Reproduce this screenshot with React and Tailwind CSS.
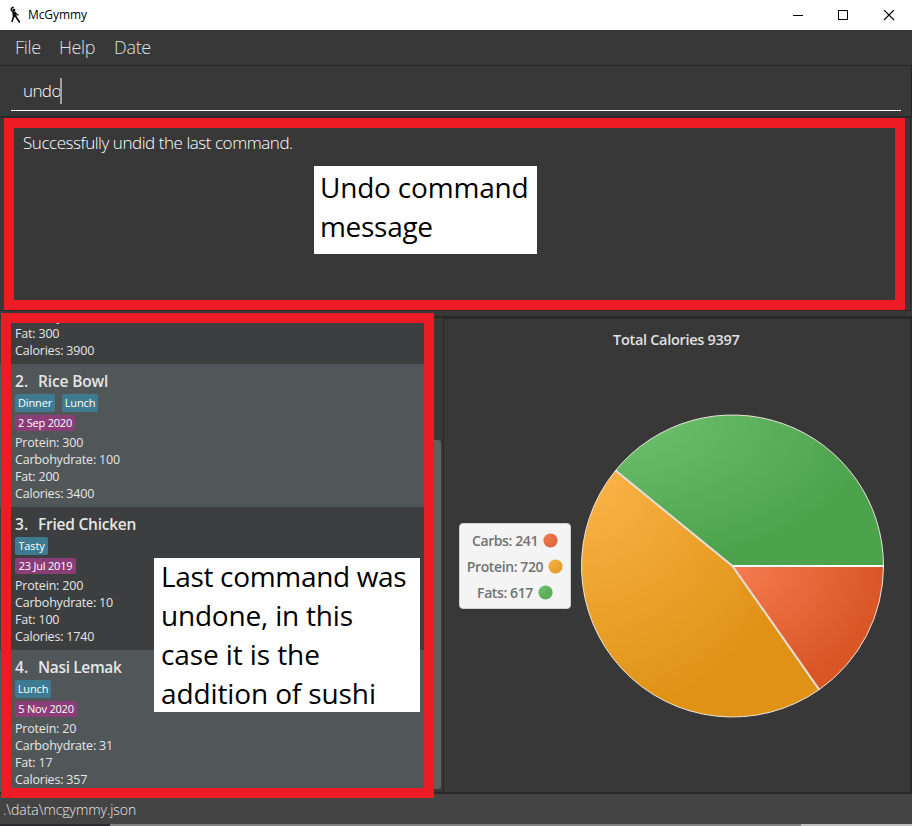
import React from "react";

const meals = [
  {
    n: 2, name: "Rice Bowl", row: "bg-[#515658]", nameCls: "tracking-[-0.15px]",
    tags: [{ t: "Dinner", w: "w-[40px]" }, { t: "Lunch", w: "w-[36px]" }],
    date: "2 Sep 2020", dateW: "w-[60px]",
    facts: ["Protein: 300", "Carbohydrate: 100", "Fat: 200", "Calories: 3400"],
  },
  {
    n: 3, name: "Fried Chicken", row: "bg-[#3c3e3f]", nameCls: "tracking-[-0.24px]",
    tags: [{ t: "Tasty", w: "w-[33px]" }],
    date: "23 Jul 2019", dateW: "w-[61px]",
    facts: ["Protein: 200", "Carbohydrate: 10", "Fat: 100", "Calories: 1740"],
  },
  {
    n: 4, name: "Nasi Lemak", row: "bg-[#515658]", nameCls: "tracking-[-0.35px]",
    tags: [{ t: "Lunch", w: "w-[36px]" }],
    date: "5 Nov 2020", dateW: "w-[62px]",
    facts: ["Protein: 20", "Carbohydrate: 31", "Fat: 17", "Calories: 357"],
  },
];

const CX = 151.5;
const CY = 152;
const R = 151;

const slices = [
  { id: "carbs", label: "Carbs: 241", value: 241, from: "#f67c52", to: "#da5625", dot: "#e0683f" },
  { id: "protein", label: "Protein: 720", value: 720, from: "#fbb549", to: "#e09216", dot: "#e6a030" },
  { id: "fats", label: "Fats: 617", value: 617, from: "#6fc26f", to: "#4da24c", dot: "#5bad5b" },
];

function slicePaths() {
  const total = slices.reduce((sum, s) => sum + s.value, 0);
  let angle = 0;
  return slices.map((s) => {
    const start = angle;
    angle += (s.value / total) * Math.PI * 2;
    const point = (a) => `${CX + R * Math.cos(a)} ${CY + R * Math.sin(a)}`;
    const large = angle - start > Math.PI ? 1 : 0;
    return {
      ...s,
      d: `M${CX} ${CY}L${point(start)}A${R} ${R} 0 ${large} 1 ${point(angle)}Z`,
      edge: `M${CX} ${CY}L${point(start)}`,
    };
  });
}

function TitleBar() {
  return (
    <header className="flex h-[30px] shrink-0 items-center bg-white text-black">
      <svg className="ml-[9px] h-[18px] w-[12px]" viewBox="0 0 12 18" fill="none" stroke="#111" strokeLinecap="round" strokeLinejoin="round">
        <circle cx="4.9" cy="3.9" r="1.5" fill="#111" stroke="none" />
        <path d="M4.3 1.2L2.3 2.4V4.3L4.4 6.2" strokeWidth="1.4" />
        <path d="M4.2 6.4L6 6.6L6.8 9.8L4.6 10.2Z" fill="#111" strokeWidth="1.8" />
        <path d="M6.3 6.4L7.8 8.2L9.4 9" strokeWidth="1.1" />
        <path d="M4.8 10.4L4 12.4L3.2 15.4" strokeWidth="1.7" />
        <path d="M6.6 10.2L8.2 12.8L10.4 16" strokeWidth="1.7" />
      </svg>
      <span className="ml-[7px] text-[12px] tracking-[-0.1px]">McGymmy</span>
      <svg className="ml-auto mr-[17px] h-[11px] w-[102px]" viewBox="0 0 102 11" fill="none" stroke="#000" shapeRendering="crispEdges">
        <path d="M0 5.5H10M45.5 .5H54.5V9.5H45.5Z" />
        <path d="M91 0L101 10M101 0L91 10" shapeRendering="auto" strokeWidth="1.1" />
      </svg>
    </header>
  );
}

function Facts({ items }) {
  return items.map((f) => (
    <div key={f} className="h-[17px] whitespace-nowrap text-[12.5px] leading-[17px] tracking-[-0.19px]">{f}</div>
  ));
}

function Meal({ meal }) {
  return (
    <li className={`flex h-[143px] shrink-0 flex-col pl-[15px] pt-[5px] text-[#e6e6e6] ${meal.row}`}>
      <h2 className="flex h-[25px] text-[15.5px] font-semibold leading-[25px]">
        <span className="w-[23px]">{meal.n}.</span>
        <span className={`whitespace-nowrap ${meal.nameCls}`}>{meal.name}</span>
      </h2>
      <div className="flex h-[18px] gap-[7px]">
        {meal.tags.map((tag) => (
          <span key={tag.t} className={`rounded-[2px] bg-[#3e7b91] text-center text-[11px] leading-[18px] tracking-[-0.15px] text-white ${tag.w}`}>{tag.t}</span>
        ))}
      </div>
      <span className={`my-[3px] h-[16px] whitespace-nowrap rounded-[2px] bg-[#8b3d78] text-center text-[11px] leading-[16px] tracking-[-0.2px] text-white ${meal.dateW}`}>{meal.date}</span>
      <Facts items={meal.facts} />
    </li>
  );
}

function Legend() {
  return (
    <div className="flex h-[86px] w-[112px] shrink-0 flex-col justify-center rounded-[4px] border border-[#d0d0d0] bg-[#f4f4f4] pt-px text-[14px] font-semibold text-[#727272]">
      {slices.map((s) => (
        <div key={s.id} className="flex h-[26px] items-center justify-center gap-[5px] leading-[26px]">
          <span className="whitespace-nowrap tracking-[-0.4px]">{s.label}</span>
          <svg className="h-[15px] w-[15px]" viewBox="0 0 15 15">
            <defs>
              <radialGradient id={`${s.id}-dot`} cx="0" cy="0" r="1">
                <stop offset="0" stopColor={s.from} />
                <stop offset="1" stopColor={s.dot} />
              </radialGradient>
            </defs>
            <circle cx="7.5" cy="7.5" r="7.1" fill={`url(#${s.id}-dot)`} />
          </svg>
        </div>
      ))}
    </div>
  );
}

function Pie() {
  const paths = slicePaths();
  return (
    <svg className="ml-[10px] h-[304px] w-[303px] shrink-0" viewBox="0 0 303 304">
      <defs>
        {slices.map((s) => (
          <radialGradient key={s.id} id={s.id} cx="0" cy="0" r="1">
            <stop offset="0" stopColor={s.from} />
            <stop offset="1" stopColor={s.to} />
          </radialGradient>
        ))}
      </defs>
      {paths.map((s) => (
        <path key={s.id} d={s.d} fill={`url(#${s.id})`} stroke="#e9e4dc" strokeWidth="1" strokeLinejoin="round" />
      ))}
      {paths.slice(1).map((s) => (
        <path key={s.id} d={s.edge} stroke="#e6dfd8" strokeWidth="2" />
      ))}
      <path d={paths[0].edge} stroke="#fff" strokeWidth="2" />
    </svg>
  );
}

export default function App() {
  return (
    <div className="relative flex h-[826px] w-[912px] flex-col overflow-hidden bg-[#383838] font-['Open_Sans','Noto_Sans',sans-serif]">
      <TitleBar />
      <nav className="flex h-[36px] shrink-0 items-center gap-[18px] border-b border-[#282828] pl-[15px] text-[18px] font-light text-[#e0e0e0]">
        <span className="w-[26px] tracking-[-0.3px]">File</span>
        <span className="w-[37px] tracking-[-0.4px]">Help</span>
        <span className="tracking-[-0.3px]">Date</span>
      </nav>
      <section className="flex h-[52px] shrink-0 flex-col border-b-2 border-r border-[#282828]">
        <div className="ml-[11px] mr-[10px] flex h-[45px] items-center border-b border-white pl-[12px] pt-[5px] text-[17px] font-light text-white">
          <span className="w-[37px] tracking-[-0.6px]">undo</span>
          <span className="h-[26px] w-[2px] bg-[#a0a0a0]" />
        </div>
      </section>
      <section className="mr-px h-[193px] shrink-0 border-b border-r border-[#282828] pl-[23px] pt-[12px] text-[17px] font-light leading-[26px] text-white">
        <p className="whitespace-nowrap tracking-[-0.45px]">Successfully undid the last command.</p>
      </section>
      <main className="mt-[5px] flex h-[478px] shrink-0 border-y-2 border-[#282828]">
        <ul className="flex h-[474px] w-[434px] flex-col overflow-hidden">
          <li className="flex h-[46px] shrink-0 flex-col justify-end bg-[#3c3e3f] pb-[5px] pl-[15px] text-[#e6e6e6]">
            <Facts items={["Carbohydrate: 100", "Fat: 300", "Calories: 3900"]} />
          </li>
          {meals.map((m) => <Meal key={m.n} meal={m} />)}
        </ul>
        <div className="flex w-[9px] flex-col pt-[122px]">
          <div className="h-[349px] w-[7px] rounded-r-[3px] bg-[#606060]" />
        </div>
        <section className="flex flex-1 flex-col border-l border-r-2 border-t border-[#282828]">
          <h1 className="ml-[169px] mt-[8px] h-[26px] whitespace-nowrap text-[14.5px] font-semibold leading-[26px] tracking-[-0.3px] text-[#e0e0e0]">Total Calories 9397</h1>
          <div className="mt-[61px] flex items-center pl-[15px]">
            <Legend />
            <Pie />
          </div>
        </section>
      </main>
      <footer className="h-[30px] shrink-0 bg-[#444] pl-[3px] text-[14px] font-light leading-[31px] tracking-[-0.05px] text-[#e6e6e6]">.\data\mcgymmy.json</footer>
      <div className="flex h-[2px] shrink-0">
        <div className="w-[110px] bg-[#2b2b2d]" />
        <div className="w-[691px] bg-[#808080]" />
        <div className="flex-1 bg-[#bdbdbd]" />
      </div>

      {/* Callouts over the window */}
      <div className="absolute left-[4px] top-[118px] h-[192px] w-[901px] border-[10px] border-[#ed1c24]" />
      <div className="absolute left-[1px] top-[313px] h-[485px] w-[433px] border-[10px] border-[#ed1c24]" />
      <div className="absolute left-[314px] top-[166px] h-[88px] w-[223px] whitespace-nowrap bg-white pl-[6px] pt-[2px] text-[28px] leading-[39px] text-black">
        <div className="tracking-[-0.2px]">Undo command</div>
        <div className="tracking-[-0.3px]">message</div>
      </div>
      <div className="absolute left-[154px] top-[558px] h-[154px] w-[266px] whitespace-nowrap bg-white pl-[7px] text-[28px] leading-[39px] text-black">
        <div className="-mt-px tracking-[-0.33px]">Last command was</div>
        <div className="tracking-[-0.2px]">undone, in this</div>
        <div className="tracking-[-0.1px]">case it is the</div>
        <div className="tracking-[-0.12px]">addition of sushi</div>
      </div>
    </div>
  );
}
